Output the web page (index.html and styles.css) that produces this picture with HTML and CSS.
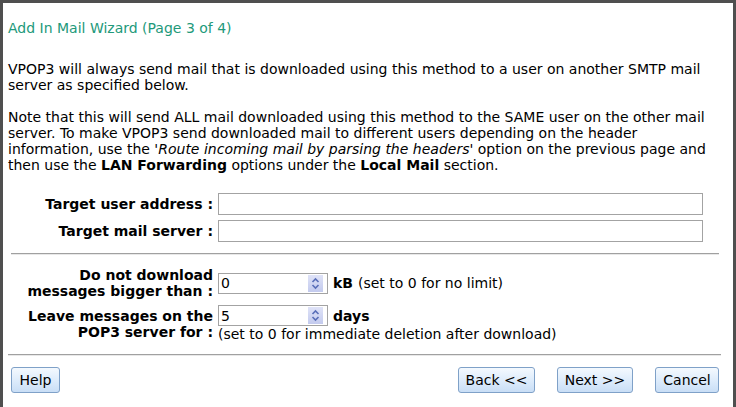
FILE: index.html
```html
<!DOCTYPE html>
<html>
<head>
<meta charset="utf-8">
<title>Add In Mail Wizard</title>
<link rel="stylesheet" href="styles.css">
</head>
<body>
<div class="frame">
  <h1 class="title">Add In Mail Wizard (Page 3 of 4)</h1>
  <p class="text">VPOP3 will always send mail that is downloaded using this method to a user on another SMTP mail server as specified below.</p>
  <p class="text">Note that this will send ALL mail downloaded using this method to the SAME user on the other mail server. To make VPOP3 send downloaded mail to different users depending on the header information, use the '<i>Route incoming mail by parsing the headers</i>' option on the previous page and then use the <b>LAN Forwarding</b> options under the <b>Local Mail</b> section.</p>

  <div class="form form-target">
    <label class="label">Target user address :</label>
    <div class="field"><input class="textbox" type="text"></div>
    <label class="label">Target mail server :</label>
    <div class="field"><input class="textbox" type="text"></div>
  </div>

  <hr class="rule rule-mid">

  <div class="form form-limits">
    <label class="label">Do not download<br>messages bigger than :</label>
    <div class="field">
      <div class="inline">
        <div class="spin"><span class="spin-value">0</span><span class="spin-btn"><svg width="11" height="15" viewBox="0 0 11 15"><path d="M2.5 6 L5.5 3 L8.5 6" fill="none" stroke="#5a6fb8" stroke-width="1.6"/><path d="M2.5 9 L5.5 12 L8.5 9" fill="none" stroke="#5a6fb8" stroke-width="1.6"/></svg></span></div>
        <span class="unit">kB</span><span class="hint">(set to 0 for no limit)</span>
      </div>
    </div>
    <label class="label">Leave messages on the<br>POP3 server for :</label>
    <div class="field">
      <div class="inline">
        <div class="spin"><span class="spin-value">5</span><span class="spin-btn"><svg width="11" height="15" viewBox="0 0 11 15"><path d="M2.5 6 L5.5 3 L8.5 6" fill="none" stroke="#5a6fb8" stroke-width="1.6"/><path d="M2.5 9 L5.5 12 L8.5 9" fill="none" stroke="#5a6fb8" stroke-width="1.6"/></svg></span></div>
        <span class="unit">days</span>
      </div>
      <div class="note">(set to 0 for immediate deletion after download)</div>
    </div>
  </div>

  <hr class="rule rule-bottom">

  <div class="buttons">
    <button class="btn btn-help">Help</button>
    <div class="nav">
      <button class="btn btn-back">Back &lt;&lt;</button>
      <button class="btn btn-next">Next &gt;&gt;</button>
      <button class="btn btn-cancel">Cancel</button>
    </div>
  </div>
</div>
</body>
</html>
```
FILE: styles.css
```css
html, body {
  margin: 0;
  padding: 0;
  background: #ffffff;
}

body {
  font-family: "DejaVu Sans", Verdana, sans-serif;
  font-size: 14px;
  line-height: 16px;
  color: #000000;
}

.frame {
  box-sizing: border-box;
  height: 407px;
  border: 3px solid #4f4f4f;
  border-bottom: none;
  padding: 0 0 0 5px;
  overflow: hidden;
}

.title {
  margin: 17px 0 25px 0;
  font-size: 14px;
  font-weight: normal;
  line-height: 16px;
  color: #22997a;
}

.text {
  margin: 0 0 16px 0;
  padding-right: 8px;
}

.form {
  display: grid;
  grid-template-columns: 205px 1fr;
  column-gap: 5px;
  align-items: center;
}

.form-target {
  margin-top: 20px;
  row-gap: 5px;
}

.form-limits {
  row-gap: 6px;
}

.label {
  text-align: right;
  font-weight: bold;
}

.textbox {
  display: block;
  box-sizing: border-box;
  width: 485px;
  height: 22px;
  margin: 0;
  border: 1px solid #a3a3a3;
  font: inherit;
  padding: 0 3px;
}

.rule {
  height: 0;
  border: none;
  border-top: 1px solid #a0a0a0;
  border-bottom: 1px solid #e8e8e8;
}

.rule-mid {
  margin: 11px 14px 12px 3px;
}

.rule-bottom {
  margin: 12px 12px 11px 0;
}

.inline {
  display: flex;
  align-items: center;
}

.spin {
  box-sizing: border-box;
  width: 110px;
  height: 21px;
  border: 1px solid #a3a3a3;
  display: flex;
  align-items: center;
  justify-content: space-between;
  padding: 0 2px 0 2px;
}

.spin-value {
  line-height: 16px;
}

.spin-btn {
  display: flex;
  align-items: center;
  justify-content: center;
  width: 15px;
  height: 17px;
  margin-right: 2px;
  background: linear-gradient(#dfe3f7, #c3caee);
}

.unit {
  font-weight: bold;
  margin-left: 5px;
}

.hint {
  margin-left: 5px;
}

.note {
  margin-top: 0;
}

.buttons {
  display: flex;
  justify-content: space-between;
  align-items: center;
  padding: 0 14px 0 3px;
}

.nav {
  display: flex;
  gap: 22px;
}

.btn {
  box-sizing: border-box;
  height: 26px;
  margin: 0;
  font-family: "DejaVu Sans", Verdana, sans-serif;
  font-size: 14px;
  color: #000000;
  border: 1px solid #7fa1c8;
  border-radius: 3px;
  background: linear-gradient(#f4f9fe 0%, #dcebfb 55%, #c9def6 100%);
  padding: 0;
}

.btn-help { width: 49px; }
.btn-back { width: 77px; }
.btn-next { width: 76px; }
.btn-cancel { width: 64px; }
```
